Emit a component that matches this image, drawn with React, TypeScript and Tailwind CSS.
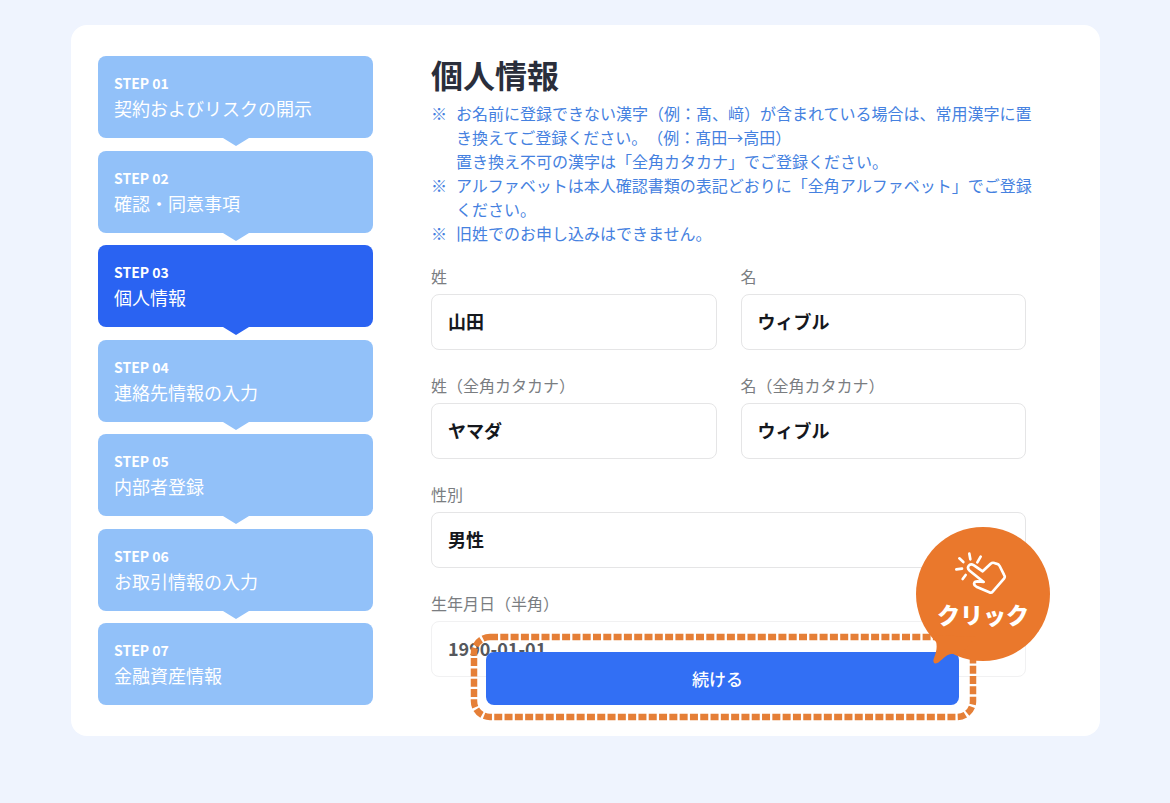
import { useState } from 'react';

const steps = [
  { id: '01', title: '契約およびリスクの開示' },
  { id: '02', title: '確認・同意事項' },
  { id: '03', title: '個人情報' },
  { id: '04', title: '連絡先情報の入力' },
  { id: '05', title: '内部者登録' },
  { id: '06', title: 'お取引情報の入力' },
  { id: '07', title: '金融資産情報' },
];

const notes = [
  [
    'お名前に登録できない漢字（例：髙、﨑）が含まれている場合は、常用漢字に置き換えてご登録ください。（例：髙田→高田）',
    '置き換え不可の漢字は「全角カタカナ」でご登録ください。',
  ],
  ['アルファベットは本人確認書類の表記どおりに「全角アルファベット」でご登録ください。'],
  ['旧姓でのお申し込みはできません。'],
];

const labelClass = 'block leading-[22px] text-[#7a7d81]';
const inputClass =
  'mt-[7px] block h-14 w-full appearance-none rounded-lg border bg-white px-4 pb-[2px] text-lg font-bold outline-none';

function Step({ id, title, active, last }: { id: string; title: string; active: boolean; last: boolean }) {
  return (
    <li
      className={`relative rounded-lg px-4 py-4 text-white ${active ? 'bg-[#2a63f2]' : 'bg-[#92c1f9]'}`}
      aria-current={active ? 'step' : undefined}
    >
      <p className="text-sm leading-[22px] font-bold">STEP {id}</p>
      <p className="text-lg leading-7">{title}</p>
      {!last && (
        <svg
          viewBox="0 0 26 8"
          className={`absolute top-full left-1/2 h-2 w-[26px] -translate-x-1/2 ${active ? 'text-[#2a63f2]' : 'text-[#92c1f9]'}`}
        >
          <path d="M0 0h26L13 8z" fill="currentColor" />
        </svg>
      )}
    </li>
  );
}

function TextField({ id, label, value, faded }: { id: string; label: string; value: string; faded?: boolean }) {
  const [text, setText] = useState(value);

  return (
    <div>
      <label htmlFor={id} className={labelClass}>
        {label}
      </label>
      <input
        id={id}
        type="text"
        value={text}
        onChange={(e) => setText(e.target.value)}
        className={`${inputClass} ${faded ? 'border-[#f1f1f2] text-[#55585d]' : 'border-[#e5e5e6] text-[#15181d]'}`}
      />
    </div>
  );
}

function ClickBubble() {
  return (
    <div className="pointer-events-none absolute -right-[91px] bottom-[41px] h-[137px] w-[134px]">
      <svg viewBox="0 0 134 137" className="absolute inset-0 size-full" fill="#ea782c">
        <circle cx="67" cy="67" r="67" />
        <path d="M18 108C22 118 21 123 18 131C16 136 19 138 23 135C29 130 33 124 44 128L60 110Z" />
      </svg>
      <div className="relative flex flex-col items-center pt-[23px] text-white">
        {/* tapping finger */}
        <svg
          viewBox="4 0 165 135"
          className="mr-1 h-[45px] w-[55px]"
          fill="none"
          stroke="currentColor"
          strokeWidth="8"
          strokeLinecap="round"
          strokeLinejoin="round"
        >
          <path d="M11 58L28 56M20 25L32 36M50 11L53 28M84 20L74 37M39 75L30 87" />
          <path d="M90 64L64 46C50 38 40 52 51 62L93 96L75 94C62 94 61 105 71 110L110 127Q116 130 120 125L154 86Q158 81 155 76L141 48Q138 42 131 41L125 39Q119 37 114 41L90 64" />
        </svg>
        <span className="mt-[3px] text-[23px] leading-8 font-black">クリック</span>
      </div>
    </div>
  );
}

export default function App() {
  const [gender, setGender] = useState('男性');

  return (
    <div className="min-h-screen bg-[#eff4fe] pt-[25px] pr-[70px] pb-16 pl-[71px] font-['Noto_Sans_CJK_JP',sans-serif] [text-spacing-trim:space-all]">
      <main className="flex gap-[58px] rounded-2xl bg-white py-[31px] pr-[66px] pl-[27px]">
        <ol className="flex w-[275px] shrink-0 flex-col justify-between">
          {steps.map((step, index) => (
            <Step
              key={step.id}
              id={step.id}
              title={step.title}
              active={step.id === '03'}
              last={index === steps.length - 1}
            />
          ))}
        </ol>

        <form className="relative min-w-0 flex-1 pb-7" onSubmit={(e) => e.preventDefault()}>
          <h1 className="text-[32px] leading-9 font-bold text-[#2a2e3b]">個人情報</h1>

          <ul className="mt-[9px] leading-6 text-[#4581e0]">
            {notes.map((lines) => (
              <li key={lines[0]} className="flex">
                <span className="w-[25px] shrink-0">※</span>
                <div>
                  {lines.map((line) => (
                    <p key={line}>{line}</p>
                  ))}
                </div>
              </li>
            ))}
          </ul>

          <div className="mt-5 mr-2 flex flex-col gap-6">
            <div className="grid grid-cols-2 gap-6">
              <TextField id="last-name" label="姓" value="山田" />
              <TextField id="first-name" label="名" value="ウィブル" />
            </div>
            <div className="grid grid-cols-2 gap-6">
              <TextField id="last-name-kana" label="姓（全角カタカナ）" value="ヤマダ" />
              <TextField id="first-name-kana" label="名（全角カタカナ）" value="ウィブル" />
            </div>
            <div>
              <label htmlFor="gender" className={labelClass}>
                性別
              </label>
              <select
                id="gender"
                value={gender}
                onChange={(e) => setGender(e.target.value)}
                className={`${inputClass} border-[#e5e5e6] text-[#15181d]`}
              >
                <option>男性</option>
                <option>女性</option>
              </select>
            </div>
            <TextField id="birthday" label="生年月日（半角）" value="1990-01-01" faded />
          </div>

          {/* submit bar floats over the end of the form */}
          <div className="absolute right-[75px] bottom-0 left-[55px]">
            <button
              type="submit"
              className="block h-[53px] w-full rounded-lg bg-[#326ff4] pr-[10px] text-[17px] font-medium text-white"
            >
              続ける
            </button>
            <div className="pointer-events-none absolute -top-[15px] -right-[14px] -bottom-3 -left-3">
              <svg className="size-full overflow-visible">
                <rect
                  width="100%"
                  height="100%"
                  rx="16"
                  fill="none"
                  stroke="#e57f37"
                  strokeWidth="6.5"
                  strokeDasharray="8 2.3"
                />
              </svg>
            </div>
            <ClickBubble />
          </div>
        </form>
      </main>
    </div>
  );
}
